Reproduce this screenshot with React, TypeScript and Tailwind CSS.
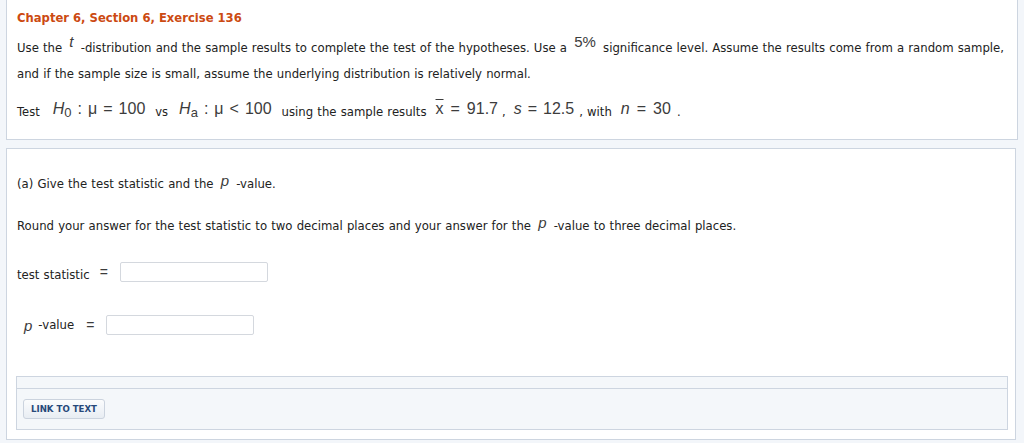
const body = "font-['DejaVu_Sans',Verdana,sans-serif] [word-spacing:0.45px]";
const math = "font-['Liberation_Sans',Arial,sans-serif] text-[#3c3c3c] leading-none [word-spacing:0px]";

function M({ children, className = "" }: { children: React.ReactNode; className?: string }) {
  return <span className={`${math} ${className}`}>{children}</span>;
}

function Op({ children, wide = false }: { children: React.ReactNode; wide?: boolean }) {
  return <span className={wide ? "mx-[7px]" : "mx-[6px]"}>{children}</span>;
}

function AnswerBox() {
  return <div className="ml-[2px] h-[20px] w-[148px] rounded-[2px] border border-[#d4d8de] bg-white" />;
}

export default function App() {
  return (
    <div className={`${body} min-h-[443px] w-[1024px] bg-[#f3f6fa] px-[6px] text-[#222]`}>
      {/* Question card */}
      <div className="h-[140px] border border-t-0 border-[#cdd5e0] bg-white pl-[10px] pr-2 pt-[11px]">
        <h2 className="text-[11.6px] font-bold leading-[15px] text-[#cc4a12] [word-spacing:0px]">
          Chapter 6, Section 6, Exercise 136
        </h2>
        <p className="mt-[8px] whitespace-nowrap text-[11.7px] leading-[16px]">
          Use the <M className="px-[3px] align-[5px] text-[15px] italic">t</M> -distribution and the sample results
          to complete the test of the hypotheses. Use a <M className="px-[3px] align-[5px] text-[15px]">5%</M>{" "}
          significance level. Assume the results come from a random sample,
        </p>
        <p className="mt-[10px] text-[11.7px] leading-[16px]">
          and if the sample size is small, assume the underlying distribution is relatively normal.
        </p>
        <p className="mt-[19px] whitespace-nowrap text-[11.5px] leading-[20px]">
          Test{" "}
          <M className="pl-[9px] pr-[10px] align-[2px] text-[16px]">
            <i>H</i>
            <span className="align-[-3px] text-[13px]">0</span>
            <Op>:</Op>μ<Op>=</Op>100
          </M>
          vs
          <M className="pl-[11px] pr-[10px] align-[2px] text-[16px]">
            <i>H</i>
            <span className="align-[-3px] text-[13px]">a</span>
            <Op>:</Op>μ<Op>&lt;</Op>100
          </M>
          <span className="text-[11.7px]">using the sample results</span>
          <M className="pl-[9px] pr-[4px] align-[2px] text-[16px]">
            <span className="overline">x</span>
            <Op wide>=</Op>91.7
          </M>
          ,
          <M className="pl-[8px] pr-[5px] align-[2px] text-[16px]">
            <i>s</i>
            <Op>=</Op>12.5
          </M>
          <span className="text-[11.7px]">, with</span>
          <M className="pl-[9px] pr-[6px] align-[2px] text-[16px]">
            <i>n</i>
            <Op wide>=</Op>30
          </M>
          .
        </p>
      </div>

      {/* Part (a) card */}
      <div className="mt-[8px] mr-[2px] flex h-[292px] flex-col border border-[#cdd5e0] bg-white pb-[9px] pl-[10px] pr-[7px] pt-[24px]">
        <p className="text-[11.7px] leading-[16px]">
          (a) Give the test statistic and the{" "}
          <M className="px-[3px] align-[2px] text-[15px] italic">p</M> -value.
        </p>
        <p className="mt-[23px] text-[11.7px] leading-[16px]">
          Round your answer for the test statistic to two decimal places and your answer for the{" "}
          <M className="px-[3px] align-[2px] text-[15px] italic">p</M> -value to three decimal places.
        </p>

        <div className="mt-[27px] flex items-center gap-[10px]">
          <span className="pt-[6px] text-[11.7px] leading-[16px]">test statistic</span>
          <M className="text-[14px]">=</M>
          <AnswerBox />
        </div>

        <div className="mt-[32px] flex items-center gap-[10px] pl-[7px]">
          <span className="flex items-end gap-[6px] pr-[2px]">
            <M className="text-[15px] italic">p</M>
            <span className="text-[11.7px] leading-[16px]">-value</span>
          </span>
          <M className="text-[14px]">=</M>
          <AnswerBox />
        </div>

        {/* Footer panel */}
        <div className="-ml-px mt-auto flex flex-col border border-[#cdd5e0] bg-[#f4f7fa]">
          <div className="h-[12px] border-b border-[#cdd5e0]" />
          <div className="h-[40px] px-[6px] pt-[6px]">
            <button className="h-[20px] rounded-[3px] border border-[#cbd3de] bg-gradient-to-b from-[#fbfcfd] to-[#e8edf3] px-[7px] text-[8.6px] font-bold leading-none text-[#27497a] [word-spacing:0px]">
              LINK TO TEXT
            </button>
          </div>
        </div>
      </div>
    </div>
  );
}
